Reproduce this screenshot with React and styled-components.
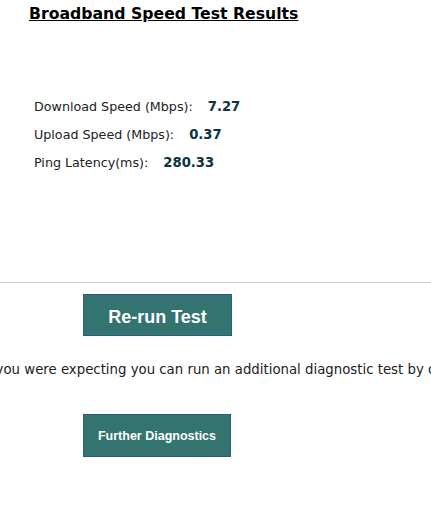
import React from "react";
import styled, { createGlobalStyle } from "styled-components";

const GlobalStyle = createGlobalStyle`
  html, body {
    margin: 0;
    padding: 0;
    background: #ffffff;
    overflow: hidden;
  }
  body {
    font-family: "DejaVu Sans", Verdana, sans-serif;
    color: #1a1a1a;
  }
`;

const Page = styled.div`
  width: 431px;
  height: 519px;
  overflow: hidden;
  display: flex;
  flex-direction: column;
`;

const Title = styled.h1`
  margin: 4px 0 0 29px;
  font-size: 15.7px;
  font-weight: bold;
  text-decoration: underline;
  color: #000;
  line-height: 20px;
`;

const Stats = styled.div`
  display: flex;
  flex-direction: column;
  gap: 9px;
  margin: 73px 0 0 34px;
`;

const StatRow = styled.div`
  display: flex;
  align-items: baseline;
  gap: 15px;
  font-size: 12.7px;
  line-height: 19px;
  color: #222;
`;

const StatValue = styled.span`
  font-weight: bold;
  font-size: 13.2px;
  color: #0d3340;
`;

const Divider = styled.hr`
  margin: 110px 0 0;
  border: none;
  border-top: 1px solid #cccccc;
  height: 0;
`;

const ButtonRow = styled.div`
  display: flex;
  padding-left: 83px;
  margin-top: ${({ $top }) => $top}px;
`;

const ActionButton = styled.button`
  width: ${({ $w }) => $w}px;
  height: ${({ $h }) => $h}px;
  background: #337470;
  border: 1px solid #2c5a7a;
  color: #fff;
  font-family: "Liberation Sans", Arial, sans-serif;
  font-weight: bold;
  font-size: ${({ $fs }) => $fs}px;
  padding: ${({ $pt }) => $pt}px 0 0;
  cursor: pointer;
`;

const Note = styled.div`
  margin-top: 25px;
  white-space: nowrap;
  font-size: 13.3px;
  line-height: 18px;
  color: #222;
  text-indent: -306px;
`;

const stats = [
  { label: "Download Speed (Mbps):", value: "7.27" },
  { label: "Upload Speed (Mbps):", value: "0.37" },
  { label: "Ping Latency(ms):", value: "280.33" },
];

export default function App() {
  return (
    <Page>
      <GlobalStyle />
      <Title>Broadband Speed Test Results</Title>
      <Stats>
        {stats.map((s) => (
          <StatRow key={s.label}>
            <span>{s.label}</span>
            <StatValue>{s.value}</StatValue>
          </StatRow>
        ))}
      </Stats>
      <Divider />
      <ButtonRow $top={11}>
        <ActionButton $w={149} $h={42} $fs={18} $pt={4}>Re-run Test</ActionButton>
      </ButtonRow>
      <Note>
        If the results of your speed test are not what you were expecting you can run an additional diagnostic test by clicking the button below
      </Note>
      <ButtonRow $top={35}>
        <ActionButton $w={148} $h={43} $fs={12.5} $pt={0}>Further Diagnostics</ActionButton>
      </ButtonRow>
    </Page>
  );
}
